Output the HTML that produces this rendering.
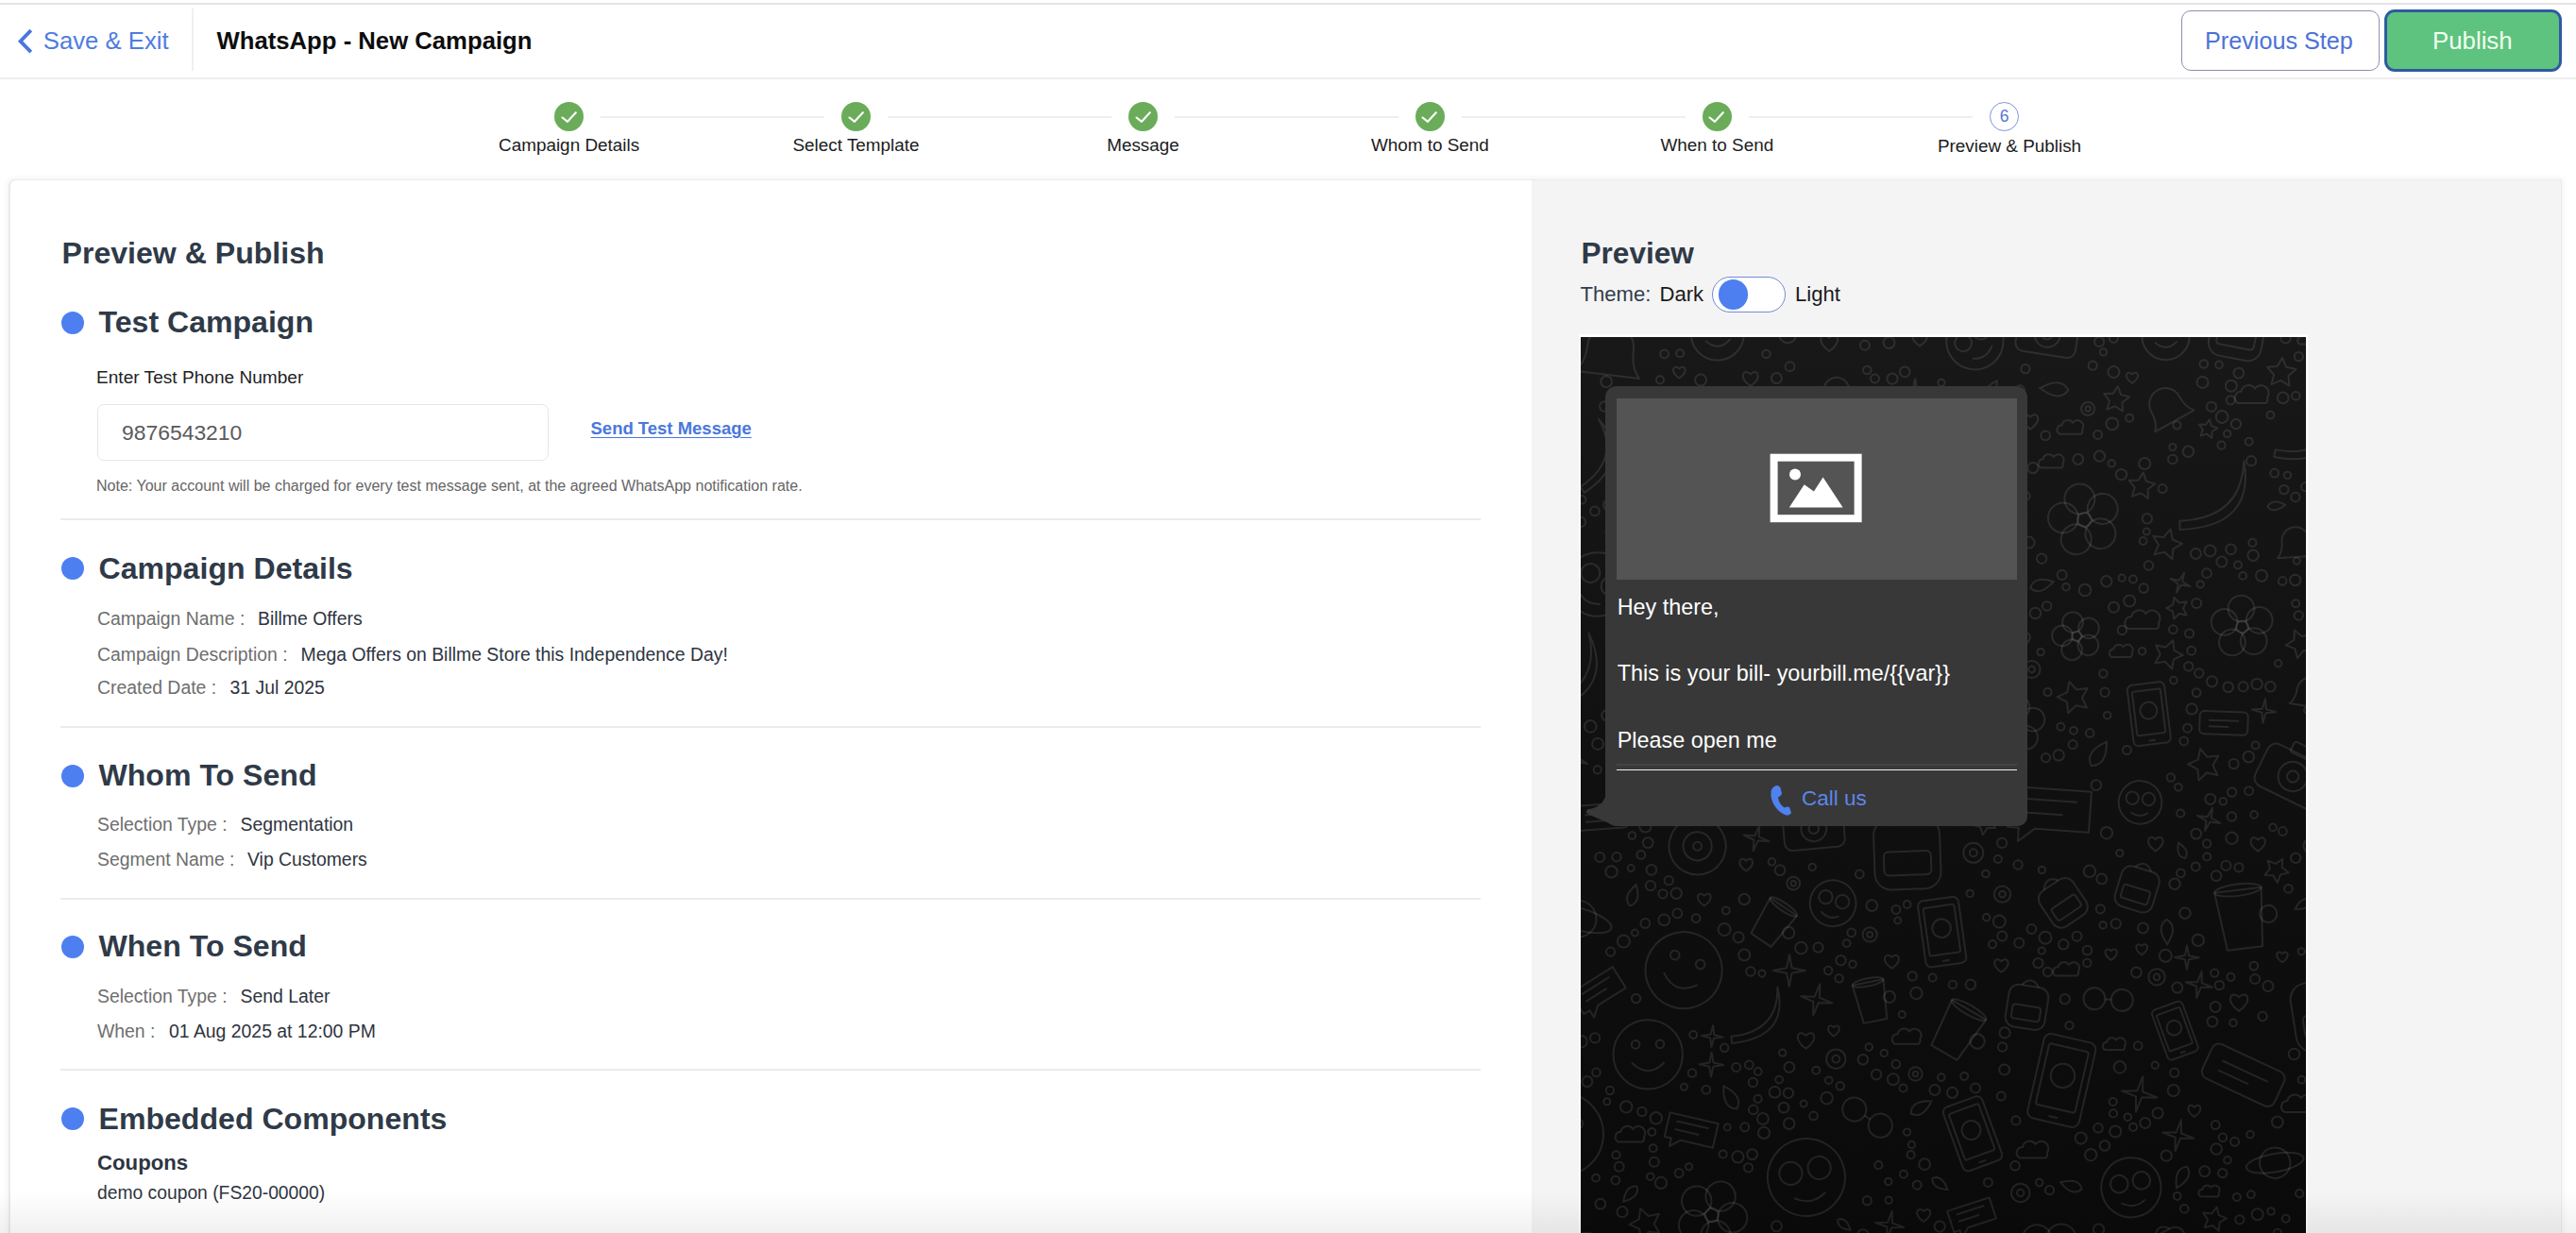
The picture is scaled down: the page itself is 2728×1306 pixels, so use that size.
<!DOCTYPE html>
<html><head><meta charset="utf-8">
<style>
html,body{margin:0;padding:0}
body{width:2728px;height:1306px;position:relative;overflow:hidden;background:#fff;font-family:"Liberation Sans",sans-serif;}
.a{position:absolute}
.t{position:absolute;line-height:1;white-space:nowrap}
.b{font-weight:bold}
</style></head><body>
<div class="a" style="left:0;top:3px;width:2728px;height:2px;background:#e3e3e3"></div>
<div class="a" style="left:0;top:81.5px;width:2728px;height:2px;background:#eeeeee"></div>
<svg class="a" style="left:14px;top:26px" width="28" height="36" viewBox="0 0 28 36"><polyline points="18.8,6.2 7.6,17.7 18.8,29.2" fill="none" stroke="#4a76de" stroke-width="3.8"/></svg>
<div class="t" style="left:45.8px;top:31.16px;font-size:25.7px;color:#4f7ddf;">Save &amp; Exit</div>
<div class="a" style="left:203px;top:9px;width:2px;height:66px;background:#f0f0f0"></div>
<div class="t b" style="left:229.5px;top:30.95px;font-size:25.7px;color:#0d0d0d;">WhatsApp - New Campaign</div>
<div class="a" style="left:2310px;top:11px;width:207.5px;height:62px;border:1.5px solid #8d90ac;border-radius:10px;background:#fff"></div>
<div class="t" style="left:2335px;top:30.98px;font-size:25.2px;color:#4d72d6;">Previous Step</div>
<div class="a" style="left:2525px;top:10px;width:182px;height:60px;border:3px solid #2f5aa3;border-radius:11px;background:#5ec37e"></div>
<div class="t" style="left:2576px;top:31.07px;font-size:25.8px;color:#f2fff2;">Publish</div>
<div class="a" style="left:587.1px;top:108.0px;width:31.0px;height:31.0px;border-radius:50%;background:#6aac5a"></div>
<svg class="a" style="left:592.6px;top:114.5px" width="20" height="18" viewBox="0 0 20 18"><polyline points="2.5,9.5 8,13.8 16.8,4.2" fill="none" stroke="#fff" stroke-width="2.1" stroke-linecap="round" stroke-linejoin="round"/></svg>
<div class="a" style="left:636.1px;top:122.5px;width:236.9px;height:2px;background:#eeeeee"></div>
<div class="t" style="left:452.6px;top:144.6px;width:300px;text-align:center;font-size:18.9px;color:#1c1c1c">Campaign Details</div>
<div class="a" style="left:891.0px;top:108.0px;width:31.0px;height:31.0px;border-radius:50%;background:#6aac5a"></div>
<svg class="a" style="left:896.5px;top:114.5px" width="20" height="18" viewBox="0 0 20 18"><polyline points="2.5,9.5 8,13.8 16.8,4.2" fill="none" stroke="#fff" stroke-width="2.1" stroke-linecap="round" stroke-linejoin="round"/></svg>
<div class="a" style="left:940.0px;top:122.5px;width:237.0px;height:2px;background:#eeeeee"></div>
<div class="t" style="left:756.5px;top:144.6px;width:300px;text-align:center;font-size:18.9px;color:#1c1c1c">Select Template</div>
<div class="a" style="left:1195.0px;top:108.0px;width:31.0px;height:31.0px;border-radius:50%;background:#6aac5a"></div>
<svg class="a" style="left:1200.5px;top:114.5px" width="20" height="18" viewBox="0 0 20 18"><polyline points="2.5,9.5 8,13.8 16.8,4.2" fill="none" stroke="#fff" stroke-width="2.1" stroke-linecap="round" stroke-linejoin="round"/></svg>
<div class="a" style="left:1244.0px;top:122.5px;width:236.9px;height:2px;background:#eeeeee"></div>
<div class="t" style="left:1060.5px;top:144.6px;width:300px;text-align:center;font-size:18.9px;color:#1c1c1c">Message</div>
<div class="a" style="left:1498.9px;top:108.0px;width:31.0px;height:31.0px;border-radius:50%;background:#6aac5a"></div>
<svg class="a" style="left:1504.4px;top:114.5px" width="20" height="18" viewBox="0 0 20 18"><polyline points="2.5,9.5 8,13.8 16.8,4.2" fill="none" stroke="#fff" stroke-width="2.1" stroke-linecap="round" stroke-linejoin="round"/></svg>
<div class="a" style="left:1547.9px;top:122.5px;width:236.9px;height:2px;background:#eeeeee"></div>
<div class="t" style="left:1364.4px;top:144.6px;width:300px;text-align:center;font-size:18.9px;color:#1c1c1c">Whom to Send</div>
<div class="a" style="left:1802.8px;top:108.0px;width:31.0px;height:31.0px;border-radius:50%;background:#6aac5a"></div>
<svg class="a" style="left:1808.3px;top:114.5px" width="20" height="18" viewBox="0 0 20 18"><polyline points="2.5,9.5 8,13.8 16.8,4.2" fill="none" stroke="#fff" stroke-width="2.1" stroke-linecap="round" stroke-linejoin="round"/></svg>
<div class="a" style="left:1851.8px;top:122.5px;width:237.2px;height:2px;background:#eeeeee"></div>
<div class="t" style="left:1668.3px;top:144.6px;width:300px;text-align:center;font-size:18.9px;color:#1c1c1c">When to Send</div>
<div class="a" style="left:2106.5px;top:107.5px;width:29px;height:29px;border-radius:50%;border:1.5px solid #7d95e0;background:#fff"></div>
<div class="t" style="left:2107.5px;top:114.6px;width:30px;text-align:center;font-size:17.5px;color:#5577d6">6</div>
<div class="t" style="left:1978.0px;top:145.7px;width:300px;text-align:center;font-size:18.9px;color:#1c1c1c">Preview &amp; Publish</div>
<div class="a" style="left:8.5px;top:189.5px;width:2701px;height:1140px;border-radius:7px 0 0 0;background:#fff;box-shadow:0 0 7px 1px rgba(0,0,0,0.06);border:1.5px solid #ebebeb;border-left:2.5px solid #eaeaea"></div>
<div class="a" style="left:1622px;top:190.5px;width:1090px;height:1140px;background:#f4f4f4"></div>
<div class="t b" style="left:65.5px;top:251.52px;font-size:32.1px;color:#2f3a48;">Preview &amp; Publish</div>
<div class="a" style="left:65px;top:329.5px;width:24px;height:24px;border-radius:50%;background:#4d7ff0"></div>
<div class="t b" style="left:104.5px;top:324.71px;font-size:32.1px;color:#2f3a48;">Test Campaign</div>
<div class="t" style="left:102px;top:390.06px;font-size:19.1px;color:#1f1f1f;">Enter Test Phone Number</div>
<div class="a" style="left:103px;top:428px;width:476px;height:58px;border:1.5px solid #e6e6e6;border-radius:7px;background:#fff"></div>
<div class="t" style="left:129px;top:446.54px;font-size:22.9px;color:#5a5a5a;">9876543210</div>
<div class="t b" style="left:625.5px;top:444.88px;font-size:18.5px;color:#4a78dc;text-decoration:underline;text-underline-offset:3px">Send Test Message</div>
<div class="t" style="left:102px;top:505.66px;font-size:16.05px;color:#666;">Note: Your account will be charged for every test message sent, at the agreed WhatsApp notification rate.</div>
<div class="a" style="left:64px;top:549px;width:1504px;height:2px;background:#ebebeb"></div>
<div class="a" style="left:65px;top:590.4px;width:24px;height:24px;border-radius:50%;background:#4d7ff0"></div>
<div class="t b" style="left:104.5px;top:585.62px;font-size:32.1px;color:#2f3a48;">Campaign Details</div>
<div class="t" style="left:103px;top:645.51px;font-size:19.4px;color:#6e6e6e;">Campaign Name :</div>
<div class="t" style="left:273px;top:645.51px;font-size:19.4px;color:#2e3440;">Billme Offers</div>
<div class="t" style="left:103px;top:683.71px;font-size:19.4px;color:#6e6e6e;">Campaign Description :</div>
<div class="t" style="left:318.5px;top:683.71px;font-size:19.4px;color:#2e3440;">Mega Offers on Billme Store this Independence Day!</div>
<div class="t" style="left:103px;top:719.11px;font-size:19.4px;color:#6e6e6e;">Created Date :</div>
<div class="t" style="left:243.5px;top:719.11px;font-size:19.4px;color:#2e3440;">31 Jul 2025</div>
<div class="a" style="left:64px;top:769px;width:1504px;height:2px;background:#ebebeb"></div>
<div class="a" style="left:65px;top:809.5px;width:24px;height:24px;border-radius:50%;background:#4d7ff0"></div>
<div class="t b" style="left:104.5px;top:804.72px;font-size:32.1px;color:#2f3a48;">Whom To Send</div>
<div class="t" style="left:103px;top:864.21px;font-size:19.4px;color:#6e6e6e;">Selection Type :</div>
<div class="t" style="left:254.5px;top:864.21px;font-size:19.4px;color:#2e3440;">Segmentation</div>
<div class="t" style="left:103px;top:900.71px;font-size:19.4px;color:#6e6e6e;">Segment Name :</div>
<div class="t" style="left:262px;top:900.71px;font-size:19.4px;color:#2e3440;">Vip Customers</div>
<div class="a" style="left:64px;top:951px;width:1504px;height:2px;background:#ebebeb"></div>
<div class="a" style="left:65px;top:991.1px;width:24px;height:24px;border-radius:50%;background:#4d7ff0"></div>
<div class="t b" style="left:104.5px;top:986.32px;font-size:32.1px;color:#2f3a48;">When To Send</div>
<div class="t" style="left:103px;top:1046.11px;font-size:19.4px;color:#6e6e6e;">Selection Type :</div>
<div class="t" style="left:254.5px;top:1046.11px;font-size:19.4px;color:#2e3440;">Send Later</div>
<div class="t" style="left:103px;top:1083.21px;font-size:19.4px;color:#6e6e6e;">When :</div>
<div class="t" style="left:179px;top:1083.21px;font-size:19.4px;color:#2e3440;">01 Aug 2025 at 12:00 PM</div>
<div class="a" style="left:64px;top:1132px;width:1504px;height:2px;background:#ebebeb"></div>
<div class="a" style="left:65px;top:1173.3px;width:24px;height:24px;border-radius:50%;background:#4d7ff0"></div>
<div class="t b" style="left:104.5px;top:1168.51px;font-size:32.1px;color:#2f3a48;">Embedded Components</div>
<div class="t b" style="left:103px;top:1221.13px;font-size:22.2px;color:#2e3440;">Coupons</div>
<div class="t" style="left:103px;top:1253.60px;font-size:19.3px;color:#2e3440;">demo coupon (FS20-00000)</div>
<div class="t b" style="left:1674.5px;top:252.74px;font-size:31.6px;color:#2f3a48;">Preview</div>
<div class="t" style="left:1673.5px;top:301.01px;font-size:22.1px;color:#333d4b;">Theme:</div>
<div class="t" style="left:1757.5px;top:301.01px;font-size:22.1px;color:#1a1a1a;">Dark</div>
<div class="a" style="left:1812.5px;top:292.5px;width:76px;height:36px;border:1.5px solid #7389d6;border-radius:20px;background:#fff"></div>
<div class="a" style="left:1819.5px;top:296px;width:31.5px;height:31.5px;border-radius:50%;background:#4d7ff0"></div>
<div class="t" style="left:1901px;top:301.01px;font-size:22.1px;color:#1a1a1a;">Light</div>
<div class="a" style="left:1672px;top:354px;width:772px;height:960px;background:#fdfdfd"></div>
<div class="a" style="left:1674px;top:357px;width:768px;height:960px;overflow:hidden;background:linear-gradient(#181818,#0f0f0f 55%,#0a0a0a)"><svg class="a" style="left:0;top:0" width="768" height="960" viewBox="0 0 768 960"><g fill="none" stroke="rgba(255,255,255,0.1)" stroke-width="2"><g transform="translate(345.5 539.8) rotate(-2)"><rect x="-35.0" y="-30.0" width="70.0" height="75.0" rx="17.5"/><rect x="-25.0" y="5.0" width="50.0" height="25.0" rx="5.0"/><path d="M-15.0,-30.0 q15.0,-20.0 30.0,0"/></g><g transform="translate(670.9 169.9) rotate(-2)"><path d="M-37.5,23.5 Q28.1,23.5 32.8,-37.5 Q42.2,32.8 -37.5,32.8 z" stroke-linejoin="round"/></g><g transform="translate(620.7 74.1) rotate(-29)"><path d="M-23.7,16.9 q6.8,-6.8 6.8,-20.3 a16.9,16.9 0 0 1 33.9,0 q0,13.6 6.8,20.3 z" stroke-linejoin="round"/><circle cx="0.0" cy="22.0" r="4.1"/></g><g transform="translate(699.4 614.5) rotate(-7)"><path d="M-24.9,-29.0 L-18.7,33.2 L18.7,33.2 L24.9,-29.0 z" stroke-linejoin="round"/><ellipse cx="0" cy="-29.0" rx="24.9" ry="6.2"/><circle cx="29.0" cy="0.0" r="9.1"/></g><g transform="translate(508.4 595.6) rotate(-34)"><rect x="-21.1" y="-18.1" width="42.1" height="45.1" rx="10.5"/><rect x="-15.0" y="3.0" width="30.1" height="15.0" rx="3.0"/><path d="M-9.0,-18.1 q9.0,-12.0 18.1,0"/></g><g transform="translate(31.0 15.7) rotate(7)"><path d="M-34.2,24.4 q9.8,-9.8 9.8,-29.3 a24.4,24.4 0 0 1 48.9,0 q0,19.5 9.8,29.3 z" stroke-linejoin="round"/><circle cx="0.0" cy="31.8" r="5.9"/></g><g transform="translate(354.9 420.5) rotate(1)"><rect x="-45.5" y="-21.6" width="91.0" height="43.1" rx="8.6"/><path d="M-28.7,-4.8 L28.7,-4.8"/><path d="M-28.7,7.2 L9.6,7.2"/></g><g transform="translate(217.7 -15.4) rotate(11)"><circle cx="12.7" cy="0.0" r="9.0"/><circle cx="3.9" cy="12.1" r="9.0"/><circle cx="-10.3" cy="7.5" r="9.0"/><circle cx="-10.3" cy="-7.5" r="9.0"/><circle cx="3.9" cy="-12.1" r="9.0"/><circle cx="0.0" cy="0.0" r="4.2"/></g><g transform="translate(786.1 975.7) rotate(15)"><circle cx="0.0" cy="0.0" r="23.9"/><ellipse cx="0" cy="0" rx="45.5" ry="14.4"/></g><g transform="translate(592.5 492.9) rotate(4)"><circle cx="0.0" cy="0.0" r="22.8"/><circle cx="-8.6" cy="-4.0" r="6.7"/><circle cx="8.6" cy="-4.0" r="6.7"/><path d="M-9.4,10.7 q9.4,6.7 18.7,0"/></g><g transform="translate(303.5 826.6) rotate(32)"><circle cx="-16.2" cy="0.0" r="12.6"/><circle cx="16.2" cy="0.0" r="12.6"/><path d="M-3.6,0.0 L3.6,0.0"/></g><g transform="translate(533.4 193.5) rotate(-31)"><circle cx="22.5" cy="0.0" r="16.0"/><circle cx="7.0" cy="21.4" r="16.0"/><circle cx="-18.2" cy="13.3" r="16.0"/><circle cx="-18.2" cy="-13.3" r="16.0"/><circle cx="7.0" cy="-21.4" r="16.0"/><circle cx="0.0" cy="0.0" r="7.5"/></g><g transform="translate(772.1 377.4) rotate(9)"><path d="M-19.5,13.9 q5.6,-5.6 5.6,-16.7 a13.9,13.9 0 0 1 27.9,0 q0,11.2 5.6,16.7 z" stroke-linejoin="round"/><circle cx="0.0" cy="18.1" r="3.3"/></g><g transform="translate(525.3 316.9) rotate(-34)"><circle cx="15.3" cy="0.0" r="10.9"/><circle cx="4.7" cy="14.6" r="10.9"/><circle cx="-12.4" cy="9.0" r="10.9"/><circle cx="-12.4" cy="-9.0" r="10.9"/><circle cx="4.7" cy="-14.6" r="10.9"/><circle cx="0.0" cy="0.0" r="5.1"/></g><g transform="translate(123.6 539.3) rotate(-22)"><circle cx="0.0" cy="0.0" r="30.1"/><circle cx="0.0" cy="0.0" r="15.1"/><circle cx="0.0" cy="0.0" r="4.5"/></g><g transform="translate(601.8 399.2) rotate(-7)"><rect x="-19.8" y="-32.4" width="39.6" height="64.8" rx="5.4"/><rect x="-15.1" y="-25.2" width="30.2" height="46.8" rx="1.8"/><circle cx="0.0" cy="-3.6" r="9.0"/><path d="M-3.6,28.1 L3.6,28.1"/></g><g transform="translate(-19.6 844.3) rotate(6)"><circle cx="0.0" cy="0.0" r="43.6"/><path d="M-20.5,10.3 q20.5,20.5 41.1,0"/><circle cx="-15.4" cy="-12.8" r="5.1"/><circle cx="15.4" cy="-12.8" r="5.1"/></g><g transform="translate(150.3 374.3) rotate(10)"><circle cx="0.0" cy="0.0" r="41.0"/><circle cx="-15.4" cy="-7.2" r="12.1"/><circle cx="15.4" cy="-7.2" r="12.1"/><path d="M-16.9,19.3 q16.9,12.1 33.7,0"/></g><g transform="translate(14.0 126.4) rotate(-34)"><path d="M-30.0,18.7 Q22.5,18.7 26.2,-30.0 Q33.7,26.2 -30.0,26.2 z" stroke-linejoin="round"/></g><g transform="translate(245.8 276.3) rotate(-29)"><path d="M-22.3,14.0 Q16.7,14.0 19.5,-22.3 Q25.1,19.5 -22.3,19.5 z" stroke-linejoin="round"/></g><g transform="translate(494.4 -4.5) rotate(9)"><rect x="-32.0" y="-19.6" width="64.1" height="42.7" rx="8.5"/><rect x="-12.5" y="-28.5" width="24.9" height="10.7" rx="2.1"/><circle cx="0.0" cy="1.8" r="13.5"/><circle cx="0.0" cy="1.8" r="5.3"/></g><g transform="translate(755.0 463.7) rotate(26)"><rect x="-36.8" y="-22.5" width="73.7" height="49.1" rx="9.8"/><rect x="-14.3" y="-32.8" width="28.7" height="12.3" rx="2.5"/><circle cx="0.0" cy="2.0" r="15.6"/><circle cx="0.0" cy="2.0" r="6.1"/></g><g transform="translate(473.2 705.4) rotate(9)"><rect x="-21.1" y="-18.1" width="42.2" height="45.2" rx="10.5"/><rect x="-15.1" y="3.0" width="30.1" height="15.1" rx="3.0"/><path d="M-9.0,-18.1 q9.0,-12.0 18.1,0"/></g><g transform="translate(138.8 930.1) rotate(7)"><circle cx="22.0" cy="0.0" r="15.7"/><circle cx="6.8" cy="20.9" r="15.7"/><circle cx="-17.8" cy="12.9" r="15.7"/><circle cx="-17.8" cy="-12.9" r="15.7"/><circle cx="6.8" cy="-20.9" r="15.7"/><circle cx="0.0" cy="0.0" r="7.3"/></g><g transform="translate(186.2 719.8) rotate(-6)"><path d="M-28.9,18.1 Q21.7,18.1 25.3,-28.9 Q32.6,25.3 -28.9,25.3 z" stroke-linejoin="round"/></g><g transform="translate(769.6 106.4) rotate(11)"><path d="M-30.8,19.2 Q23.1,19.2 26.9,-30.8 Q34.6,26.9 -30.8,26.9 z" stroke-linejoin="round"/></g><g transform="translate(144.8 -3.4) rotate(-4)"><circle cx="0.0" cy="0.0" r="28.0"/><path d="M-13.2,6.6 q13.2,13.2 26.4,0"/><circle cx="-9.9" cy="-8.2" r="3.3"/><circle cx="9.9" cy="-8.2" r="3.3"/></g><g transform="translate(17.7 262.0) rotate(33)"><circle cx="0.0" cy="0.0" r="33.8"/><circle cx="-12.7" cy="-6.0" r="10.0"/><circle cx="12.7" cy="-6.0" r="10.0"/><path d="M-13.9,15.9 q13.9,10.0 27.9,0"/></g><g transform="translate(-2.8 616.2) rotate(16)"><circle cx="0.0" cy="0.0" r="19.3"/><ellipse cx="0" cy="0" rx="36.6" ry="11.6"/></g><g transform="translate(256.0 64.9) rotate(-30)"><circle cx="-17.2" cy="0.0" r="13.4"/><circle cx="17.2" cy="0.0" r="13.4"/><path d="M-3.8,0.0 L3.8,0.0"/></g><g transform="translate(496.6 973.3) rotate(16)"><circle cx="22.0" cy="0.0" r="15.6"/><circle cx="6.8" cy="20.9" r="15.6"/><circle cx="-17.8" cy="12.9" r="15.6"/><circle cx="-17.8" cy="-12.9" r="15.6"/><circle cx="6.8" cy="-20.9" r="15.6"/><circle cx="0.0" cy="0.0" r="7.3"/></g><g transform="translate(395.7 290.2) rotate(-33)"><circle cx="0.0" cy="0.0" r="22.6"/><circle cx="0.0" cy="0.0" r="11.3"/><circle cx="0.0" cy="0.0" r="3.4"/></g><g transform="translate(71.2 759.9) rotate(-1)"><circle cx="0.0" cy="0.0" r="36.7"/><path d="M-17.3,8.6 q17.3,17.3 34.5,0"/><circle cx="-12.9" cy="-10.8" r="4.3"/><circle cx="12.9" cy="-10.8" r="4.3"/></g><g transform="translate(398.9 733.8) rotate(30)"><path d="M-20.9,-24.4 L-15.7,27.9 L15.7,27.9 L20.9,-24.4 z" stroke-linejoin="round"/><ellipse cx="0" cy="-24.4" rx="20.9" ry="5.2"/><circle cx="24.4" cy="0.0" r="7.7"/></g><g transform="translate(700.5 307.0) rotate(-21)"><circle cx="19.5" cy="0.0" r="13.9"/><circle cx="6.0" cy="18.5" r="13.9"/><circle cx="-15.8" cy="11.5" r="13.9"/><circle cx="-15.8" cy="-11.5" r="13.9"/><circle cx="6.0" cy="-18.5" r="13.9"/><circle cx="0.0" cy="0.0" r="6.5"/></g><g transform="translate(629.4 734.6) rotate(-20)"><rect x="-17.2" y="-28.1" width="34.3" height="56.2" rx="4.7"/><rect x="-13.1" y="-21.8" width="26.2" height="40.6" rx="1.6"/><circle cx="0.0" cy="-3.1" r="7.8"/><path d="M-3.1,24.3 L3.1,24.3"/></g><g transform="translate(619.5 -0.9) rotate(-3)"><circle cx="0.0" cy="0.0" r="25.1"/><path d="M-11.8,5.9 q11.8,11.8 23.6,0"/><circle cx="-8.9" cy="-7.4" r="3.0"/><circle cx="8.9" cy="-7.4" r="3.0"/></g><g transform="translate(623.9 964.0) rotate(-27)"><rect x="-20.3" y="-17.4" width="40.6" height="43.5" rx="10.1"/><rect x="-14.5" y="2.9" width="29.0" height="14.5" rx="2.9"/><path d="M-8.7,-17.4 q8.7,-11.6 17.4,0"/></g><g transform="translate(509.3 787.4) rotate(13)"><rect x="-28.0" y="-45.8" width="56.0" height="91.7" rx="7.6"/><rect x="-21.4" y="-35.6" width="42.8" height="66.2" rx="2.5"/><circle cx="0.0" cy="-5.1" r="12.7"/><path d="M-5.1,39.7 L5.1,39.7"/></g><g transform="translate(697.0 -13.3) rotate(11)"><rect x="-28.2" y="-24.2" width="56.4" height="60.5" rx="14.1"/><rect x="-20.2" y="4.0" width="40.3" height="20.2" rx="4.0"/><path d="M-12.1,-24.2 q12.1,-16.1 24.2,0"/></g><g transform="translate(238.9 890.0) rotate(-11)"><circle cx="0.0" cy="0.0" r="41.0"/><circle cx="-15.4" cy="-7.2" r="12.1"/><circle cx="15.4" cy="-7.2" r="12.1"/><path d="M-16.9,19.3 q16.9,12.1 33.8,0"/></g><g transform="translate(681.0 408.9) rotate(2)"><rect x="-25.6" y="-12.1" width="51.1" height="24.2" rx="4.8"/><path d="M-16.1,-2.7 L16.1,-2.7"/><path d="M-16.1,4.0 L5.4,4.0"/></g><g transform="translate(496.2 502.8) rotate(4)"><path d="M-43.1,-24.0 h86.3 v43.1 h-57.5 l-16.8,14.4 v-14.4 h-12.0 z" stroke-linejoin="round"/><path d="M-28.8,-12.0 L28.8,-12.0"/><path d="M-28.8,2.4 L14.4,2.4"/></g><g transform="translate(67.8 399.5) rotate(-17)"><circle cx="0.0" cy="0.0" r="21.4"/><circle cx="0.0" cy="0.0" r="10.7"/><circle cx="0.0" cy="0.0" r="3.2"/></g><g transform="translate(267.1 599.8) rotate(16)"><circle cx="0.0" cy="0.0" r="24.4"/><circle cx="-9.2" cy="-4.3" r="7.2"/><circle cx="9.2" cy="-4.3" r="7.2"/><path d="M-10.1,11.5 q10.1,7.2 20.1,0"/></g><g transform="translate(414.9 843.8) rotate(-20)"><rect x="-21.9" y="-35.9" width="43.9" height="71.8" rx="6.0"/><rect x="-16.8" y="-27.9" width="33.5" height="51.8" rx="2.0"/><circle cx="0.0" cy="-4.0" r="10.0"/><path d="M-4.0,31.1 L4.0,31.1"/></g><g transform="translate(129.1 183.9) rotate(34)"><rect x="-45.5" y="-21.5" width="90.9" height="43.1" rx="8.6"/><path d="M-28.7,-4.8 L28.7,-4.8"/><path d="M-28.7,7.2 L9.6,7.2"/></g><g transform="translate(701.7 781.7) rotate(25)"><rect x="-42.1" y="-19.9" width="84.2" height="39.9" rx="8.0"/><path d="M-26.6,-4.4 L26.6,-4.4"/><path d="M-26.6,6.6 L8.9,6.6"/></g><g transform="translate(246.6 518.9) rotate(-5)"><rect x="-32.1" y="-19.6" width="64.1" height="42.7" rx="8.5"/><rect x="-12.5" y="-28.5" width="24.9" height="10.7" rx="2.1"/><circle cx="0.0" cy="1.8" r="13.5"/><circle cx="0.0" cy="1.8" r="5.3"/></g><g transform="translate(307.8 702.6) rotate(-11)"><path d="M-16.7,-19.5 L-12.5,22.3 L12.5,22.3 L16.7,-19.5 z" stroke-linejoin="round"/><ellipse cx="0" cy="-19.5" rx="16.7" ry="4.2"/><circle cx="19.5" cy="0.0" r="6.1"/></g><g transform="translate(308.2 162.0) rotate(1)"><path d="M-16.8,-19.6 L-12.6,22.4 L12.6,22.4 L16.8,-19.6 z" stroke-linejoin="round"/><ellipse cx="0" cy="-19.6" rx="16.8" ry="4.2"/><circle cx="19.6" cy="0.0" r="6.2"/></g><g transform="translate(109.2 451.8) rotate(-0)"><path d="M-24.3,15.2 Q18.2,15.2 21.3,-24.3 Q27.4,21.3 -24.3,21.3 z" stroke-linejoin="round"/></g><g transform="translate(462.0 409.6) rotate(-15)"><circle cx="17.5" cy="0.0" r="12.4"/><circle cx="5.4" cy="16.6" r="12.4"/><circle cx="-14.1" cy="10.3" r="12.4"/><circle cx="-14.1" cy="-10.3" r="12.4"/><circle cx="5.4" cy="-16.6" r="12.4"/><circle cx="0.0" cy="0.0" r="5.8"/></g><g transform="translate(22.1 508.1) rotate(-4)"><rect x="-27.8" y="-13.2" width="55.5" height="26.3" rx="5.3"/><path d="M-17.5,-2.9 L17.5,-2.9"/><path d="M-17.5,4.4 L5.8,4.4"/></g><g transform="translate(379.5 113.4) rotate(21)"><path d="M-29.2,-34.0 L-21.9,38.9 L21.9,38.9 L29.2,-34.0 z" stroke-linejoin="round"/><ellipse cx="0" cy="-34.0" rx="29.2" ry="7.3"/><circle cx="34.0" cy="0.0" r="10.7"/></g><g transform="translate(582.9 900.8) rotate(-9)"><circle cx="0.0" cy="0.0" r="31.6"/><circle cx="-11.9" cy="-5.6" r="9.3"/><circle cx="11.9" cy="-5.6" r="9.3"/><path d="M-13.0,14.8 q13.0,9.3 26.0,0"/></g><g transform="translate(240.5 421.0) rotate(28)"><rect x="-39.4" y="-18.7" width="78.8" height="37.3" rx="7.5"/><path d="M-24.9,-4.1 L24.9,-4.1"/><path d="M-24.9,6.2 L8.3,6.2"/></g><g transform="translate(735.2 874.7) rotate(-10)"><circle cx="0.0" cy="0.0" r="16.2"/><ellipse cx="0" cy="0" rx="30.8" ry="9.7"/></g><g transform="translate(417.4 4.3) rotate(-34)"><circle cx="0.0" cy="0.0" r="30.1"/><circle cx="-11.3" cy="-5.3" r="8.9"/><circle cx="11.3" cy="-5.3" r="8.9"/><path d="M-12.4,14.2 q12.4,8.9 24.8,0"/></g><g transform="translate(-10.0 357.1) rotate(-18)"><path d="M-35.6,22.2 Q26.7,22.2 31.1,-35.6 Q40.0,31.1 -35.6,31.1 z" stroke-linejoin="round"/></g><g transform="translate(6.1 967.4) rotate(19)"><circle cx="0.0" cy="0.0" r="18.6"/><ellipse cx="0" cy="0" rx="35.4" ry="11.2"/></g><g transform="translate(173.2 286.3) rotate(-18)"><circle cx="0.0" cy="0.0" r="30.8"/><circle cx="-11.6" cy="-5.4" r="9.1"/><circle cx="11.6" cy="-5.4" r="9.1"/><path d="M-12.7,14.5 q12.7,9.1 25.4,0"/></g><g transform="translate(787.4 710.8) rotate(-9)"><rect x="-34.1" y="-29.2" width="68.1" height="73.0" rx="17.0"/><rect x="-24.3" y="4.9" width="48.7" height="24.3" rx="4.9"/><path d="M-14.6,-29.2 q14.6,-19.5 29.2,0"/></g><g transform="translate(414.4 931.0) rotate(-18)"><path d="M-23.4,-13.0 h46.8 v23.4 h-31.2 l-9.1,7.8 v-7.8 h-6.5 z" stroke-linejoin="round"/><path d="M-15.6,-6.5 L15.6,-6.5"/><path d="M-15.6,1.3 L7.8,1.3"/></g><g transform="translate(116.9 841.5) rotate(13)"><path d="M-26.2,-14.6 h52.4 v26.2 h-35.0 l-10.2,8.7 v-8.7 h-7.3 z" stroke-linejoin="round"/><path d="M-17.5,-7.3 L17.5,-7.3"/><path d="M-17.5,1.5 L8.7,1.5"/></g><g transform="translate(203.7 619.9) rotate(34)"><path d="M-17.0,-19.8 L-12.8,22.7 L12.8,22.7 L17.0,-19.8 z" stroke-linejoin="round"/><ellipse cx="0" cy="-19.8" rx="17.0" ry="4.3"/><circle cx="19.8" cy="0.0" r="6.2"/></g><g transform="translate(558.6 701.6) rotate(3)"><circle cx="-14.7" cy="0.0" r="11.5"/><circle cx="14.7" cy="0.0" r="11.5"/><path d="M-3.3,0.0 L3.3,0.0"/></g><g transform="translate(98.2 291.0) rotate(-13)"><path d="M-21.7,13.6 Q16.3,13.6 19.0,-21.7 Q24.4,19.0 -21.7,19.0 z" stroke-linejoin="round"/></g><g transform="translate(382.7 630.1) rotate(-8)"><rect x="-21.6" y="-35.3" width="43.2" height="70.7" rx="5.9"/><rect x="-16.5" y="-27.5" width="33.0" height="51.1" rx="2.0"/><circle cx="0.0" cy="-3.9" r="9.8"/><path d="M-3.9,30.6 L3.9,30.6"/></g><g transform="translate(109.1 670.7) rotate(20)"><circle cx="0.0" cy="0.0" r="40.5"/><path d="M-19.0,9.5 q19.0,19.0 38.1,0"/><circle cx="-14.3" cy="-11.9" r="4.8"/><circle cx="14.3" cy="-11.9" r="4.8"/></g><g transform="translate(590.4 580.7) rotate(17)"><rect x="-20.6" y="-17.7" width="41.3" height="44.2" rx="10.3"/><rect x="-14.7" y="2.9" width="29.5" height="14.7" rx="2.9"/><path d="M-8.8,-17.7 q8.8,-11.8 17.7,0"/></g><g transform="translate(425.9 221.7) rotate(30)"><circle cx="0.0" cy="0.0" r="19.0"/><ellipse cx="0" cy="0" rx="36.1" ry="11.4"/></g><g transform="translate(155.8 83.4) rotate(16)"><path d="M-19.2,13.7 q5.5,-5.5 5.5,-16.5 a13.7,13.7 0 0 1 27.5,0 q0,11.0 5.5,16.5 z" stroke-linejoin="round"/><circle cx="0.0" cy="17.9" r="3.3"/></g><g transform="translate(19.4 693.3) rotate(-32)"><path d="M-26.2,-14.5 h52.3 v26.2 h-34.9 l-10.2,8.7 v-8.7 h-7.3 z" stroke-linejoin="round"/><path d="M-17.4,-7.3 L17.4,-7.3"/><path d="M-17.4,1.5 L8.7,1.5"/></g><g transform="translate(757.1 218.5) rotate(-4)"><path d="M-20.2,14.4 q5.8,-5.8 5.8,-17.3 a14.4,14.4 0 0 1 28.8,0 q0,11.5 5.8,17.3 z" stroke-linejoin="round"/><circle cx="0.0" cy="18.7" r="3.5"/></g><g transform="translate(486.2 263.0) rotate(75)"><path d="M0,-14.8 Q11.9,3.0 0,10.4 Q-11.9,3.0 0,-14.8 z"/></g><polygon points="595.8,143.6 598.9,152.8 608.3,155.4 600.5,161.2 600.9,170.9 593.0,165.3 583.8,168.7 586.7,159.4 580.7,151.8 590.4,151.7" stroke-linejoin="round"/><path d="M175.2,565.5 C163.4,557.7 169.3,548.8 175.2,554.7 C181.1,548.8 187.0,557.7 175.2,565.5z"/><path d="M156.2,462.6 a4.6,4.6 0 0 1 2.3,-8.7 a5.8,5.8 0 0 1 10.4,-2.3 a5.2,5.2 0 0 1 9.3,7.0 a3.5,3.5 0 0 1 -1.2,4.1 z"/><path d="M320.3,274.3 C307.3,265.7 313.8,255.9 320.3,262.4 C326.7,255.9 333.2,265.7 320.3,274.3z"/><polygon points="221.0,654.1 223.6,668.3 237.8,671.1 223.6,673.7 220.7,687.9 218.1,673.7 203.9,670.9 218.1,668.3" stroke-linejoin="round"/><polygon points="635.9,829.1 635.9,843.5 649.3,848.8 634.9,848.8 629.6,862.2 629.6,847.8 616.2,842.5 630.6,842.5" stroke-linejoin="round"/><circle cx="306.2" cy="632.9" r="7.6"/><circle cx="306.2" cy="632.9" r="2.9"/><path d="M555.0,754.9 a4.4,4.4 0 0 1 2.2,-8.2 a5.5,5.5 0 0 1 9.9,-2.2 a4.9,4.9 0 0 1 8.8,6.6 a3.3,3.3 0 0 1 -1.1,3.8 z"/><g transform="translate(434.4 56.4) rotate(32)"><path d="M0,-11.9 Q9.5,2.4 0,8.3 Q-9.5,2.4 0,-11.9 z"/></g><polygon points="673.7,921.5 675.7,930.1 684.0,933.4 676.4,937.9 675.9,946.8 669.2,941.0 660.7,943.2 664.1,935.1 659.3,927.6 668.1,928.4" stroke-linejoin="round"/><circle cx="309.1" cy="473.6" r="11.2"/><circle cx="309.1" cy="473.6" r="4.3"/><polygon points="325.3,57.2 323.7,65.1 329.3,70.8 321.3,71.8 317.6,78.9 314.2,71.6 306.3,70.2 312.2,64.8 311.1,56.8 318.1,60.7" stroke-linejoin="round"/><circle cx="772.7" cy="538.9" r="7.2"/><circle cx="772.7" cy="538.9" r="2.8"/><g transform="translate(291.2 306.2) rotate(36)"><path d="M0,-16.5 Q13.2,3.3 0,11.6 Q-13.2,3.3 0,-16.5 z"/></g><path d="M584.0,48.9 C573.7,42.0 578.8,34.2 584.0,39.4 C589.1,34.2 594.3,42.0 584.0,48.9z"/><polygon points="445.6,71.6 443.9,83.9 454.6,90.0 442.3,88.3 436.2,99.0 437.9,86.8 427.2,80.6 439.5,82.3" stroke-linejoin="round"/><path d="M696.1,70.0 a6.5,6.5 0 0 1 3.3,-12.2 a8.1,8.1 0 0 1 14.6,-3.3 a7.3,7.3 0 0 1 13.0,9.8 a4.9,4.9 0 0 1 -1.6,5.7 z"/><path d="M697.1,713.8 C681.0,703.1 689.0,691.1 697.1,699.1 C705.1,691.1 713.1,703.1 697.1,713.8z"/><g transform="translate(521.4 899.6) rotate(288)"><path d="M0,-13.9 Q11.2,2.8 0,9.8 Q-11.2,2.8 0,-13.9 z"/></g><circle cx="190.8" cy="228.4" r="7.6"/><circle cx="190.8" cy="228.4" r="2.9"/><polygon points="412.0,357.5 410.9,367.7 419.9,372.6 409.7,371.4 404.9,380.5 406.0,370.3 396.9,365.4 407.2,366.6" stroke-linejoin="round"/><path d="M189.3,127.8 C175.9,118.9 182.6,108.9 189.3,115.6 C195.9,108.9 202.6,118.9 189.3,127.8z"/><g transform="translate(268.6 128.0) rotate(24)"><path d="M0,-17.6 Q14.1,3.5 0,12.3 Q-14.1,3.5 0,-17.6 z"/></g><path d="M656.4,910.3 a4.1,4.1 0 0 1 2.0,-7.6 a5.1,5.1 0 0 1 9.1,-2.0 a4.6,4.6 0 0 1 8.1,6.1 a3.0,3.0 0 0 1 -1.0,3.6 z"/><path d="M594.1,654.3 C583.9,647.4 589.0,639.8 594.1,644.9 C599.3,639.8 604.4,647.4 594.1,654.3z"/><path d="M263.2,15.0 C247.7,4.7 255.5,-7.0 263.2,0.8 C271.0,-7.0 278.7,4.7 263.2,15.0z"/><polygon points="724.9,383.2 725.9,394.1 736.3,397.2 725.5,398.2 722.3,408.6 721.4,397.7 710.9,394.6 721.8,393.7" stroke-linejoin="round"/><polygon points="253.3,685.4 253.0,699.8 266.3,705.5 251.8,705.2 246.1,718.5 246.5,704.0 233.2,698.3 247.6,698.7" stroke-linejoin="round"/><g transform="translate(735.1 178.8) rotate(85)"><path d="M0,-11.1 Q8.9,2.2 0,7.8 Q-8.9,2.2 0,-11.1 z"/></g><path d="M561.7,659.9 C551.1,652.8 556.4,644.9 561.7,650.2 C566.9,644.9 572.2,652.8 561.7,659.9z"/><circle cx="415.8" cy="546.3" r="10.5"/><circle cx="415.8" cy="546.3" r="4.0"/><polygon points="268.7,953.8 271.1,962.7 279.8,965.7 272.1,970.8 271.9,980.0 264.7,974.2 255.9,976.9 259.1,968.3 253.9,960.7 263.1,961.1" stroke-linejoin="round"/><circle cx="477.6" cy="352.0" r="9.0"/><circle cx="477.6" cy="352.0" r="3.4"/><circle cx="446.5" cy="590.1" r="8.7"/><circle cx="446.5" cy="590.1" r="3.4"/><polygon points="357.8,297.4 356.5,313.7 371.1,320.9 354.9,319.6 347.6,334.1 349.0,317.9 334.4,310.7 350.6,312.0" stroke-linejoin="round"/><path d="M464.8,869.4 a6.1,6.1 0 0 1 3.1,-11.4 a7.6,7.6 0 0 1 13.7,-3.1 a6.9,6.9 0 0 1 12.2,9.2 a4.6,4.6 0 0 1 -1.5,5.3 z"/><path d="M449.9,155.7 C433.0,144.5 441.5,131.8 449.9,140.2 C458.3,131.8 466.8,144.5 449.9,155.7z"/><g transform="translate(620.8 627.6) rotate(179)"><path d="M0,-15.5 Q12.4,3.1 0,10.8 Q-12.4,3.1 0,-15.5 z"/></g><polygon points="624.5,203.7 626.8,214.5 637.0,218.8 627.4,224.3 626.4,235.3 618.3,227.8 607.5,230.3 612.0,220.3 606.3,210.8 617.3,212.0" stroke-linejoin="round"/><g transform="translate(159.6 807.5) rotate(330)"><path d="M0,-16.4 Q13.1,3.3 0,11.5 Q-13.1,3.3 0,-16.4 z"/></g><polygon points="641.8,280.3 638.0,287.3 641.6,294.4 633.8,292.9 628.2,298.5 627.1,290.7 620.1,287.1 627.2,283.7 628.5,275.8 633.9,281.6" stroke-linejoin="round"/><polygon points="536.7,372.0 531.0,382.1 536.0,392.6 524.6,390.2 516.2,398.3 515.0,386.7 504.7,381.2 515.3,376.4 517.4,365.0 525.2,373.6" stroke-linejoin="round"/><path d="M297.3,248.7 C283.0,239.1 290.1,228.4 297.3,235.6 C304.4,228.4 311.6,239.1 297.3,248.7z"/><g transform="translate(766.2 600.4) rotate(241)"><path d="M0,-11.0 Q8.8,2.2 0,7.7 Q-8.8,2.2 0,-11.0 z"/></g><g transform="translate(379.1 895.9) rotate(127)"><path d="M0,-11.8 Q9.4,2.4 0,8.3 Q-9.4,2.4 0,-11.8 z"/></g><g transform="translate(205.0 173.6) rotate(278)"><path d="M0,-15.2 Q12.1,3.0 0,10.6 Q-12.1,3.0 0,-15.2 z"/></g><polygon points="669.1,498.6 667.7,509.5 677.3,514.9 666.4,513.5 661.1,523.1 662.5,512.2 652.8,506.9 663.7,508.3" stroke-linejoin="round"/><polygon points="743.3,553.0 742.6,561.8 749.6,567.4 741.0,569.5 737.9,577.8 733.2,570.3 724.3,569.9 730.0,563.1 727.6,554.6 735.9,557.9" stroke-linejoin="round"/><polygon points="140.1,729.3 141.2,739.0 150.7,741.6 140.9,742.7 138.4,752.2 137.2,742.5 127.8,739.9 137.5,738.8" stroke-linejoin="round"/><polygon points="-2.0,430.4 -4.9,444.1 6.8,451.9 -6.9,449.0 -14.7,460.7 -11.8,446.9 -23.5,439.2 -9.7,442.1" stroke-linejoin="round"/><circle cx="225.2" cy="578.7" r="6.9"/><circle cx="225.2" cy="578.7" r="2.7"/><polygon points="773.9,314.4 770.0,324.1 775.8,332.7 765.4,332.0 758.9,340.2 756.4,330.1 746.6,326.5 755.4,320.9 755.9,310.5 763.9,317.2" stroke-linejoin="round"/><g transform="translate(504.0 55.3) rotate(274)"><path d="M0,-17.8 Q14.3,3.6 0,12.5 Q-14.3,3.6 0,-17.8 z"/></g><path d="M267.9,740.5 C257.7,733.7 262.8,726.1 267.9,731.2 C273.0,726.1 278.1,733.7 267.9,740.5z"/><path d="M579.8,308.9 a6.7,6.7 0 0 1 3.4,-12.6 a8.4,8.4 0 0 1 15.1,-3.4 a7.6,7.6 0 0 1 13.5,10.1 a5.0,5.0 0 0 1 -1.7,5.9 z"/><path d="M503.0,676.6 a5.0,5.0 0 0 1 2.5,-9.4 a6.3,6.3 0 0 1 11.3,-2.5 a5.7,5.7 0 0 1 10.1,7.5 a3.8,3.8 0 0 1 -1.3,4.4 z"/><path d="M717.2,544.6 C704.0,535.8 710.6,525.9 717.2,532.5 C723.8,525.9 730.3,535.8 717.2,544.6z"/><path d="M761.5,7.6 a4.5,4.5 0 0 1 2.2,-8.4 a5.6,5.6 0 0 1 10.1,-2.2 a5.0,5.0 0 0 1 8.9,6.7 a3.4,3.4 0 0 1 -1.1,3.9 z"/><polygon points="138.6,757.7 140.5,768.6 151.3,770.9 140.4,772.8 138.0,783.6 136.2,772.7 125.4,770.3 136.3,768.5" stroke-linejoin="round"/><path d="M363.2,936.9 C351.1,928.9 357.2,919.8 363.2,925.9 C369.2,919.8 375.3,928.9 363.2,936.9z"/><path d="M86.2,245.3 C75.7,238.3 80.9,230.5 86.2,235.7 C91.4,230.5 96.7,238.3 86.2,245.3z"/><g transform="translate(358.6 817.1) rotate(59)"><path d="M0,-15.0 Q12.0,3.0 0,10.5 Q-12.0,3.0 0,-15.0 z"/></g><path d="M232.2,964.4 C222.4,957.9 227.3,950.5 232.2,955.4 C237.2,950.5 242.1,957.9 232.2,964.4z"/><path d="M179.8,51.9 C166.0,42.7 172.9,32.4 179.8,39.3 C186.6,32.4 193.5,42.7 179.8,51.9z"/><path d="M359.1,9.4 C345.9,0.5 352.5,-9.4 359.1,-2.8 C365.7,-9.4 372.4,0.5 359.1,9.4z"/><g transform="translate(67.3 215.6) rotate(106)"><path d="M0,-11.2 Q8.9,2.2 0,7.8 Q-8.9,2.2 0,-11.2 z"/></g><g transform="translate(94.2 123.3) rotate(264)"><path d="M0,-17.1 Q13.7,3.4 0,12.0 Q-13.7,3.4 0,-17.1 z"/></g><polygon points="595.2,783.3 595.2,799.5 610.3,805.5 594.0,805.5 588.0,820.6 588.0,804.4 572.9,798.4 589.2,798.4" stroke-linejoin="round"/><polygon points="189.3,517.5 188.7,529.3 199.5,534.1 187.7,533.6 182.8,544.3 183.4,532.5 172.7,527.6 184.4,528.2" stroke-linejoin="round"/><polygon points="377.3,173.7 375.3,183.5 383.6,188.9 373.9,186.9 368.4,195.3 370.4,185.5 362.0,180.0 371.8,182.0" stroke-linejoin="round"/><path d="M313.5,358.5 C299.0,348.8 306.3,337.9 313.5,345.2 C320.8,337.9 328.1,348.8 313.5,358.5z"/><path d="M130.8,602.5 C118.9,594.6 124.9,585.6 130.8,591.6 C136.8,585.6 142.7,594.6 130.8,602.5z"/><path d="M104.3,43.5 C93.5,36.2 98.9,28.1 104.3,33.5 C109.7,28.1 115.1,36.2 104.3,43.5z"/><polygon points="421.3,451.5 418.9,468.0 433.3,476.3 416.9,473.9 408.6,488.3 411.0,471.9 396.6,463.5 413.0,465.9" stroke-linejoin="round"/><g transform="translate(90.5 335.5) rotate(305)"><path d="M0,-11.9 Q9.5,2.4 0,8.4 Q-9.5,2.4 0,-11.9 z"/></g><path d="M242.4,175.7 a5.1,5.1 0 0 1 2.5,-9.5 a6.4,6.4 0 0 1 11.5,-2.5 a5.7,5.7 0 0 1 10.2,7.6 a3.8,3.8 0 0 1 -1.3,4.5 z"/><path d="M238.5,753.7 C223.3,743.5 230.9,732.1 238.5,739.7 C246.2,732.1 253.8,743.5 238.5,753.7z"/><polygon points="82.9,928.8 77.7,939.2 83.4,949.3 71.9,947.6 64.0,956.1 62.1,944.7 51.5,939.8 61.8,934.4 63.2,922.9 71.5,931.0" stroke-linejoin="round"/><path d="M608.8,544.3 C595.5,535.3 602.2,525.3 608.8,532.0 C615.5,525.3 622.2,535.3 608.8,544.3z"/><circle cx="354.5" cy="780.5" r="7.2"/><circle cx="354.5" cy="780.5" r="2.8"/><path d="M507.1,102.7 a5.1,5.1 0 0 1 2.5,-9.5 a6.3,6.3 0 0 1 11.4,-2.5 a5.7,5.7 0 0 1 10.1,7.6 a3.8,3.8 0 0 1 -1.3,4.4 z"/><path d="M39.5,852.5 a5.8,5.8 0 0 1 2.9,-10.8 a7.2,7.2 0 0 1 12.9,-2.9 a6.5,6.5 0 0 1 11.5,8.6 a4.3,4.3 0 0 1 -1.4,5.0 z"/><g transform="translate(637.1 545.3) rotate(337)"><path d="M0,-10.6 Q8.5,2.1 0,7.4 Q-8.5,2.1 0,-10.6 z"/></g><polygon points="444.8,291.2 444.0,298.1 449.2,302.7 442.4,304.1 439.6,310.5 436.2,304.4 429.2,303.8 434.0,298.6 432.4,291.8 438.8,294.7" stroke-linejoin="round"/><circle cx="391.7" cy="339.8" r="6.7"/><circle cx="391.7" cy="339.8" r="2.6"/><g transform="translate(703.4 961.0) rotate(91)"><path d="M0,-17.1 Q13.7,3.4 0,12.0 Q-13.7,3.4 0,-17.1 z"/></g><g transform="translate(-9.0 767.3) rotate(179)"><path d="M0,-10.5 Q8.4,2.1 0,7.3 Q-8.4,2.1 0,-10.5 z"/></g><polygon points="227.6,206.4 225.9,217.3 235.5,222.9 224.5,221.3 219.0,230.8 220.6,219.9 211.1,214.3 222.0,216.0" stroke-linejoin="round"/><g transform="translate(225.2 112.7) rotate(94)"><path d="M0,-10.8 Q8.6,2.2 0,7.6 Q-8.6,2.2 0,-10.8 z"/></g><circle cx="89.6" cy="71.9" r="10.7"/><circle cx="89.6" cy="71.9" r="4.1"/><polygon points="436.3,504.9 433.8,513.1 439.1,519.9 430.5,520.0 425.8,527.2 423.0,519.1 414.7,516.7 421.6,511.6 421.2,503.0 428.2,507.9" stroke-linejoin="round"/><g transform="translate(637.5 888.0) rotate(206)"><path d="M0,-14.9 Q11.9,3.0 0,10.4 Q-11.9,3.0 0,-14.9 z"/></g><path d="M27.2,183.2 a6.2,6.2 0 0 1 3.1,-11.5 a7.7,7.7 0 0 1 13.8,-3.1 a6.9,6.9 0 0 1 12.3,9.2 a4.6,4.6 0 0 1 -1.5,5.4 z"/><circle cx="465.7" cy="906.5" r="9.7"/><circle cx="465.7" cy="906.5" r="3.7"/><path d="M476.1,97.6 C461.9,88.1 469.0,77.4 476.1,84.6 C483.2,77.4 490.3,88.1 476.1,97.6z"/><polygon points="329.6,925.5 330.0,938.5 342.2,942.9 329.2,943.3 324.8,955.6 324.4,942.5 312.2,938.1 325.2,937.7" stroke-linejoin="round"/><polygon points="333.1,207.3 334.7,217.7 344.9,220.1 334.5,221.7 332.2,232.0 330.6,221.6 320.3,219.2 330.7,217.6" stroke-linejoin="round"/><polygon points="639.0,249.6 637.3,259.0 645.4,264.1 636.0,262.4 630.9,270.6 632.6,261.1 624.4,256.0 633.9,257.7" stroke-linejoin="round"/><polygon points="666.0,87.4 667.8,94.0 674.2,96.3 668.5,100.0 668.3,106.9 663.0,102.6 656.4,104.5 658.8,98.1 654.9,92.5 661.8,92.8" stroke-linejoin="round"/><path d="M332.7,748.8 a5.6,5.6 0 0 1 2.8,-10.5 a7.0,7.0 0 0 1 12.5,-2.8 a6.3,6.3 0 0 1 11.2,8.4 a4.2,4.2 0 0 1 -1.4,4.9 z"/><path d="M649.8,826.0 C638.6,818.5 644.2,810.0 649.8,815.7 C655.5,810.0 661.1,818.5 649.8,826.0z"/><path d="M329.4,668.7 C316.6,660.1 323.0,650.5 329.4,656.9 C335.9,650.5 342.3,660.1 329.4,668.7z"/><path d="M742.9,662.2 C732.9,655.6 737.9,648.1 742.9,653.1 C747.8,648.1 752.8,655.6 742.9,662.2z"/><path d="M242.5,349.1 a4.5,4.5 0 0 1 2.3,-8.5 a5.6,5.6 0 0 1 10.2,-2.3 a5.1,5.1 0 0 1 9.0,6.8 a3.4,3.4 0 0 1 -1.1,3.9 z"/><g transform="translate(53.7 906.3) rotate(222)"><path d="M0,-12.6 Q10.0,2.5 0,8.8 Q-10.0,2.5 0,-12.6 z"/></g><g transform="translate(264.6 228.0) rotate(237)"><path d="M0,-14.3 Q11.4,2.9 0,10.0 Q-11.4,2.9 0,-14.3 z"/></g><polygon points="354.2,955.0 355.8,964.4 364.4,968.4 355.9,972.7 354.8,982.1 348.0,975.5 338.7,977.3 343.0,968.8 338.4,960.5 347.8,961.9" stroke-linejoin="round"/><g transform="translate(359.4 256.1) rotate(54)"><path d="M0,-14.5 Q11.6,2.9 0,10.1 Q-11.6,2.9 0,-14.5 z"/></g><g transform="translate(54.8 593.2) rotate(16)"><path d="M0,-13.6 Q10.9,2.7 0,9.6 Q-10.9,2.7 0,-13.6 z"/></g><polygon points="657.6,671.8 657.6,684.1 669.1,688.7 656.8,688.7 652.2,700.1 652.2,687.8 640.7,683.2 653.1,683.2" stroke-linejoin="round"/><path d="M745.1,820.9 a6.4,6.4 0 0 1 3.2,-11.9 a8.0,8.0 0 0 1 14.3,-3.2 a7.2,7.2 0 0 1 12.7,9.5 a4.8,4.8 0 0 1 -1.6,5.6 z"/><polygon points="743.1,21.8 747.1,31.7 757.5,34.0 749.4,40.9 750.4,51.5 741.3,45.9 731.5,50.1 734.1,39.8 727.0,31.8 737.7,31.0" stroke-linejoin="round"/><path d="M487.3,138.4 a4.9,4.9 0 0 1 2.4,-9.2 a6.1,6.1 0 0 1 11.0,-2.4 a5.5,5.5 0 0 1 9.8,7.3 a3.7,3.7 0 0 1 -1.2,4.3 z"/><polygon points="627.2,321.3 628.4,331.8 637.7,336.9 628.0,341.3 626.1,351.7 619.0,343.8 608.4,345.2 613.7,336.0 609.1,326.4 619.5,328.6" stroke-linejoin="round"/><path d="M562.0,338.9 a4.6,4.6 0 0 1 2.3,-8.5 a5.7,5.7 0 0 1 10.2,-2.3 a5.1,5.1 0 0 1 9.1,6.8 a3.4,3.4 0 0 1 -1.1,4.0 z"/><polygon points="675.3,443.4 669.4,453.4 674.4,464.0 663.0,461.5 654.5,469.5 653.3,457.9 643.1,452.3 653.8,447.6 656.0,436.1 663.7,444.8" stroke-linejoin="round"/><circle cx="294.5" cy="442.0" r="7.6"/><circle cx="294.5" cy="442.0" r="2.9"/><path d="M469.0,326.9 C457.1,318.9 463.0,310.0 469.0,316.0 C475.0,310.0 480.9,318.9 469.0,326.9z"/><circle cx="270.3" cy="764.7" r="10.2"/><circle cx="270.3" cy="764.7" r="3.9"/><path d="M445.4,672.6 C433.0,664.3 439.2,654.9 445.4,661.2 C451.6,654.9 457.9,664.3 445.4,672.6z"/><g transform="translate(547.3 443.7) rotate(33)"><path d="M0,-17.6 Q14.1,3.5 0,12.3 Q-14.1,3.5 0,-17.6 z"/></g><g transform="translate(277.8 939.2) rotate(130)"><path d="M0,-10.1 Q8.1,2.0 0,7.1 Q-8.1,2.0 0,-10.1 z"/></g><circle cx="537.1" cy="76.0" r="7.1"/><circle cx="537.1" cy="76.0" r="2.7"/><polygon points="568.8,52.0 571.9,60.9 581.1,63.4 573.5,69.2 574.0,78.6 566.2,73.2 557.3,76.6 560.0,67.5 554.1,60.1 563.6,59.9" stroke-linejoin="round"/><circle cx="610.0" cy="677.9" r="8.7"/><circle cx="610.0" cy="677.9" r="3.3"/><g transform="translate(62.6 88.8) rotate(109)"><path d="M0,-10.9 Q8.7,2.2 0,7.6 Q-8.7,2.2 0,-10.9 z"/></g><circle cx="571.7" cy="961.0" r="11.0"/><circle cx="571.7" cy="961.0" r="4.2"/><polygon points="354.1,44.3 355.8,53.8 365.3,55.7 355.8,57.4 353.9,66.8 352.2,57.4 342.8,55.5 352.2,53.8" stroke-linejoin="round"/><polygon points="642.0,644.5 644.0,655.2 654.6,657.3 644.0,659.2 641.9,669.9 639.9,659.2 629.2,657.1 639.9,655.1" stroke-linejoin="round"/><circle cx="69.5" cy="324.4" r="5.6"/><circle cx="0.0" cy="195.9" r="5.1"/><circle cx="643.4" cy="121.3" r="5.7"/><circle cx="351.2" cy="676.9" r="4.7"/><circle cx="707.3" cy="444.6" r="5.8"/><circle cx="492.0" cy="636.2" r="6.5"/><circle cx="58.1" cy="315.0" r="4.4"/><circle cx="557.6" cy="400.7" r="3.8"/><circle cx="305.2" cy="752.1" r="3.8"/><circle cx="566.7" cy="621.4" r="5.1"/><circle cx="536.5" cy="649.6" r="4.8"/><circle cx="441.4" cy="483.3" r="4.4"/><circle cx="208.9" cy="467.5" r="3.7"/><circle cx="39.5" cy="79.0" r="5.9"/><circle cx="207.4" cy="43.6" r="5.5"/><circle cx="639.9" cy="610.2" r="5.8"/><circle cx="563.7" cy="810.0" r="4.1"/><circle cx="496.5" cy="903.6" r="4.6"/><circle cx="291.8" cy="494.7" r="6.1"/><circle cx="212.4" cy="145.1" r="3.9"/><circle cx="355.4" cy="695.0" r="6.2"/><circle cx="573.3" cy="310.4" r="4.7"/><circle cx="465.3" cy="55.9" r="4.6"/><circle cx="564.5" cy="286.2" r="5.5"/><circle cx="215.0" cy="816.1" r="5.4"/><circle cx="680.3" cy="491.8" r="3.8"/><circle cx="595.5" cy="625.9" r="5.5"/><circle cx="672.2" cy="834.6" r="4.5"/><circle cx="673.2" cy="860.0" r="5.8"/><circle cx="295.3" cy="569.0" r="4.4"/><circle cx="221.5" cy="31.2" r="4.9"/><circle cx="54.4" cy="528.0" r="3.8"/><circle cx="713.1" cy="505.9" r="3.8"/><circle cx="164.7" cy="773.4" r="4.5"/><circle cx="570.8" cy="546.6" r="3.7"/><circle cx="73.9" cy="581.1" r="5.1"/><circle cx="727.9" cy="687.5" r="5.5"/><circle cx="343.2" cy="36.8" r="5.4"/><circle cx="127.6" cy="109.8" r="5.2"/><circle cx="128.9" cy="486.9" r="4.9"/><circle cx="155.1" cy="128.1" r="6.2"/><circle cx="44.1" cy="324.6" r="4.0"/><circle cx="666.8" cy="489.4" r="5.5"/><circle cx="564.0" cy="822.4" r="4.1"/><circle cx="689.6" cy="482.1" r="4.7"/><circle cx="760.3" cy="295.0" r="4.7"/><circle cx="707.7" cy="110.7" r="4.0"/><circle cx="18.1" cy="430.9" r="6.0"/><circle cx="182.4" cy="789.5" r="4.7"/><circle cx="668.9" cy="725.1" r="5.4"/><circle cx="200.4" cy="479.4" r="5.8"/><circle cx="16.5" cy="778.9" r="4.3"/><circle cx="460.9" cy="829.9" r="4.6"/><circle cx="122.1" cy="615.6" r="4.4"/><circle cx="303.3" cy="35.0" r="4.3"/><circle cx="31.6" cy="651.1" r="4.6"/><circle cx="333.9" cy="606.4" r="4.5"/><circle cx="127.1" cy="45.6" r="6.0"/><circle cx="294.8" cy="365.0" r="3.9"/><circle cx="566.2" cy="841.5" r="6.1"/><circle cx="585.0" cy="836.8" r="4.1"/><circle cx="68.4" cy="518.4" r="6.1"/><circle cx="440.4" cy="320.3" r="4.5"/><circle cx="273.9" cy="462.0" r="5.1"/><circle cx="685.7" cy="370.8" r="5.3"/><circle cx="654.8" cy="356.0" r="4.7"/><circle cx="684.7" cy="102.4" r="3.7"/><circle cx="311.5" cy="44.1" r="4.5"/><circle cx="73.8" cy="889.2" r="3.8"/><circle cx="236.1" cy="811.9" r="3.5"/><circle cx="272.7" cy="366.4" r="6.5"/><circle cx="522.0" cy="416.8" r="3.9"/><circle cx="667.9" cy="73.8" r="5.1"/><circle cx="44.0" cy="926.7" r="5.6"/><circle cx="743.1" cy="258.4" r="4.3"/><circle cx="562.8" cy="91.8" r="6.4"/><circle cx="409.3" cy="505.0" r="4.3"/><circle cx="335.7" cy="617.9" r="3.5"/><circle cx="220.9" cy="773.4" r="5.4"/><circle cx="757.3" cy="62.2" r="4.3"/><circle cx="350.4" cy="855.4" r="3.6"/><circle cx="115.9" cy="328.1" r="4.7"/><circle cx="474.6" cy="217.6" r="6.0"/><circle cx="688.5" cy="224.9" r="5.3"/><circle cx="30.9" cy="206.1" r="4.5"/><circle cx="651.7" cy="526.1" r="5.4"/><circle cx="300.9" cy="8.7" r="5.0"/><circle cx="121.6" cy="251.6" r="3.9"/><circle cx="620.2" cy="867.1" r="5.7"/><circle cx="222.0" cy="471.8" r="4.8"/><circle cx="84.7" cy="354.6" r="3.8"/><circle cx="362.7" cy="228.4" r="3.8"/><circle cx="432.2" cy="358.4" r="4.4"/><circle cx="463.1" cy="559.0" r="4.7"/><circle cx="324.0" cy="94.3" r="5.1"/><circle cx="644.5" cy="314.0" r="4.6"/><circle cx="548.0" cy="837.8" r="4.8"/><circle cx="448.7" cy="776.0" r="5.5"/><circle cx="17.7" cy="458.4" r="4.1"/><circle cx="738.0" cy="948.9" r="4.2"/><circle cx="67.2" cy="464.2" r="6.4"/><circle cx="570.9" cy="773.4" r="6.3"/><circle cx="14.9" cy="184.3" r="4.9"/><circle cx="192.2" cy="466.9" r="6.1"/><circle cx="436.1" cy="643.1" r="4.1"/><circle cx="696.8" cy="38.1" r="5.4"/><circle cx="348.3" cy="234.4" r="4.2"/><circle cx="694.0" cy="92.1" r="5.2"/><circle cx="511.3" cy="643.3" r="5.2"/><circle cx="608.2" cy="771.3" r="3.7"/><circle cx="447.8" cy="336.6" r="5.6"/><circle cx="716.7" cy="929.2" r="6.0"/><circle cx="429.7" cy="614.8" r="3.7"/><circle cx="326.2" cy="914.3" r="3.7"/><circle cx="84.0" cy="45.3" r="4.1"/><circle cx="484.4" cy="663.1" r="5.2"/><circle cx="651.4" cy="229.5" r="5.5"/><circle cx="721.0" cy="252.8" r="6.0"/><circle cx="639.2" cy="923.3" r="4.4"/><circle cx="627.9" cy="363.6" r="3.8"/><circle cx="627.7" cy="798.1" r="6.1"/><circle cx="102.4" cy="610.4" r="4.9"/><circle cx="377.5" cy="215.1" r="4.5"/><circle cx="412.2" cy="589.4" r="3.7"/><circle cx="688.4" cy="677.8" r="4.1"/><circle cx="434.7" cy="959.9" r="6.0"/><circle cx="20.3" cy="551.1" r="5.0"/><circle cx="113.6" cy="87.5" r="5.9"/><circle cx="722.1" cy="719.5" r="4.7"/><circle cx="647.1" cy="393.9" r="5.7"/><circle cx="87.2" cy="147.6" r="4.2"/><circle cx="210.3" cy="321.3" r="5.9"/><circle cx="209.0" cy="383.4" r="3.5"/><circle cx="481.4" cy="292.5" r="5.8"/><circle cx="508.3" cy="412.7" r="4.0"/><circle cx="32.5" cy="566.4" r="6.2"/><circle cx="761.2" cy="907.2" r="4.1"/><circle cx="210.1" cy="786.6" r="3.9"/><circle cx="416.5" cy="389.6" r="4.1"/><circle cx="712.1" cy="231.3" r="5.7"/><circle cx="260.6" cy="806.1" r="6.3"/><circle cx="581.1" cy="85.7" r="4.0"/><circle cx="651.2" cy="560.9" r="4.5"/><circle cx="757.2" cy="551.8" r="5.2"/><circle cx="240.2" cy="232.2" r="6.0"/><circle cx="749.4" cy="584.3" r="4.4"/><circle cx="525.5" cy="634.8" r="5.0"/><circle cx="763.4" cy="786.7" r="3.9"/><circle cx="437.7" cy="175.7" r="4.5"/><circle cx="638.7" cy="428.0" r="4.4"/><circle cx="529.7" cy="848.6" r="6.1"/><circle cx="471.6" cy="168.4" r="4.1"/><circle cx="266.4" cy="474.2" r="3.7"/><circle cx="689.5" cy="530.7" r="6.2"/><circle cx="517.4" cy="729.1" r="4.2"/><circle cx="730.3" cy="370.2" r="5.3"/><circle cx="564.4" cy="37.1" r="6.0"/><circle cx="743.4" cy="523.5" r="4.4"/><circle cx="534.0" cy="268.0" r="6.3"/><circle cx="364.1" cy="876.2" r="5.9"/><circle cx="40.7" cy="878.7" r="5.0"/><circle cx="45.4" cy="640.0" r="6.5"/><circle cx="733.0" cy="519.4" r="3.8"/><circle cx="549.4" cy="126.2" r="5.6"/><circle cx="313.1" cy="781.1" r="5.3"/><circle cx="72.2" cy="135.1" r="4.7"/><circle cx="441.9" cy="553.0" r="4.1"/><circle cx="470.9" cy="33.7" r="4.6"/><circle cx="173.2" cy="595.5" r="5.7"/><circle cx="485.6" cy="895.6" r="3.8"/><circle cx="755.5" cy="759.5" r="5.8"/><circle cx="584.9" cy="256.5" r="4.0"/><circle cx="274.8" cy="336.2" r="4.2"/><circle cx="493.6" cy="285.0" r="4.8"/><circle cx="678.8" cy="238.1" r="5.5"/><circle cx="174.4" cy="480.1" r="4.5"/><circle cx="488.1" cy="234.7" r="5.2"/><circle cx="743.7" cy="64.4" r="5.9"/><circle cx="635.2" cy="504.5" r="4.1"/><circle cx="244.1" cy="119.8" r="4.9"/><circle cx="624.9" cy="466.5" r="4.2"/><circle cx="763.2" cy="650.8" r="3.6"/><circle cx="179.9" cy="672.0" r="4.8"/><circle cx="679.9" cy="847.8" r="4.3"/><circle cx="194.0" cy="842.9" r="6.1"/><circle cx="737.8" cy="831.5" r="5.9"/><circle cx="232.0" cy="364.6" r="6.3"/><circle cx="619.3" cy="655.2" r="6.5"/><circle cx="595.6" cy="216.0" r="3.9"/><circle cx="155.2" cy="836.9" r="3.5"/><circle cx="542.2" cy="30.2" r="4.6"/><circle cx="629.0" cy="579.2" r="5.7"/><circle cx="206.6" cy="492.7" r="4.6"/><circle cx="74.9" cy="564.3" r="5.4"/><circle cx="738.7" cy="345.7" r="3.7"/><circle cx="202.4" cy="555.8" r="3.8"/><circle cx="166.4" cy="868.4" r="6.1"/><circle cx="287.8" cy="389.9" r="5.9"/><circle cx="85.0" cy="895.9" r="6.1"/><circle cx="20.9" cy="918.2" r="5.4"/><circle cx="626.8" cy="129.5" r="4.8"/><circle cx="347.0" cy="345.8" r="5.9"/><circle cx="540.2" cy="866.2" r="6.2"/><circle cx="77.8" cy="873.8" r="5.0"/><circle cx="488.4" cy="564.4" r="3.7"/><circle cx="40.7" cy="467.1" r="3.5"/><circle cx="158.2" cy="479.3" r="4.9"/><circle cx="632.9" cy="476.8" r="3.9"/><circle cx="175.4" cy="141.0" r="5.5"/><circle cx="672.1" cy="709.5" r="5.5"/><circle cx="79.8" cy="827.3" r="6.2"/><circle cx="109.5" cy="794.2" r="3.5"/><circle cx="701.6" cy="370.3" r="5.1"/><circle cx="180.7" cy="430.7" r="5.2"/><circle cx="286.7" cy="630.8" r="4.4"/><circle cx="548.5" cy="945.3" r="5.7"/><circle cx="68.3" cy="621.0" r="4.9"/><circle cx="326.5" cy="201.6" r="4.3"/><circle cx="457.9" cy="177.3" r="6.3"/><circle cx="345.6" cy="842.1" r="3.7"/><circle cx="626.8" cy="116.6" r="3.6"/><circle cx="572.5" cy="145.6" r="5.7"/><circle cx="588.4" cy="672.9" r="5.5"/><circle cx="64.8" cy="820.4" r="4.7"/><circle cx="418.2" cy="164.4" r="3.6"/><circle cx="684.9" cy="871.8" r="3.8"/><circle cx="663.2" cy="550.5" r="4.1"/><circle cx="218.1" cy="303.2" r="4.0"/><circle cx="393.9" cy="685.9" r="4.2"/><circle cx="643.7" cy="348.9" r="4.7"/><circle cx="683.4" cy="559.8" r="5.1"/><circle cx="59.7" cy="342.1" r="3.8"/><circle cx="746.5" cy="1.5" r="5.1"/><circle cx="452.8" cy="288.9" r="3.9"/><circle cx="445.5" cy="363.7" r="5.7"/><circle cx="372.6" cy="678.5" r="4.1"/><circle cx="341.9" cy="886.7" r="4.0"/><circle cx="691.6" cy="452.1" r="5.1"/><circle cx="76.7" cy="859.2" r="4.0"/><circle cx="90.1" cy="489.4" r="5.0"/><circle cx="760.4" cy="20.7" r="4.6"/><circle cx="627.3" cy="309.7" r="4.4"/><circle cx="387.9" cy="501.3" r="4.0"/><circle cx="556.9" cy="525.2" r="6.2"/><circle cx="275.5" cy="660.2" r="5.2"/><circle cx="679.7" cy="885.5" r="4.6"/><circle cx="211.0" cy="564.7" r="5.4"/><circle cx="38.0" cy="550.7" r="4.7"/><circle cx="599.2" cy="206.0" r="3.5"/><circle cx="446.5" cy="266.0" r="3.5"/><circle cx="321.8" cy="122.9" r="4.4"/><circle cx="412.9" cy="685.9" r="5.3"/><circle cx="538.9" cy="565.8" r="6.2"/><circle cx="52.8" cy="298.8" r="5.5"/><circle cx="312.0" cy="203.4" r="4.6"/><circle cx="553.5" cy="15.9" r="3.7"/><circle cx="451.9" cy="462.3" r="4.2"/><circle cx="32.1" cy="455.0" r="5.2"/><circle cx="578.4" cy="437.5" r="4.5"/><circle cx="381.8" cy="784.1" r="3.8"/><circle cx="487.1" cy="333.6" r="3.7"/><circle cx="216.1" cy="129.6" r="3.9"/><circle cx="249.3" cy="776.8" r="4.0"/><circle cx="556.8" cy="258.7" r="5.7"/><circle cx="381.9" cy="48.3" r="3.6"/><circle cx="88.3" cy="617.3" r="5.9"/><circle cx="251.5" cy="646.6" r="5.1"/><circle cx="27.8" cy="809.7" r="3.5"/><circle cx="37.5" cy="866.3" r="4.1"/><circle cx="177.5" cy="879.8" r="4.6"/><circle cx="273.6" cy="679.2" r="4.2"/><circle cx="333.8" cy="285.7" r="4.4"/><circle cx="303.0" cy="109.8" r="5.3"/><circle cx="326.5" cy="6.0" r="6.0"/><circle cx="153.0" cy="238.6" r="4.2"/><circle cx="551.7" cy="573.9" r="5.4"/><circle cx="101.2" cy="589.2" r="5.7"/><circle cx="325.8" cy="894.5" r="3.7"/><circle cx="446.3" cy="634.5" r="5.0"/><circle cx="545.9" cy="474.6" r="5.4"/><circle cx="514.0" cy="264.7" r="3.8"/><circle cx="445.2" cy="804.1" r="4.5"/><circle cx="652.1" cy="376.6" r="4.4"/><circle cx="201.4" cy="96.1" r="5.6"/><circle cx="187.8" cy="778.0" r="3.9"/><circle cx="714.1" cy="680.0" r="5.0"/><circle cx="153.8" cy="607.5" r="4.0"/><circle cx="271.8" cy="197.9" r="5.8"/><circle cx="459.5" cy="118.2" r="6.3"/><circle cx="631.8" cy="689.1" r="5.5"/><circle cx="526.7" cy="129.5" r="5.4"/><circle cx="716.1" cy="367.6" r="5.7"/><circle cx="394.8" cy="489.0" r="5.2"/><circle cx="744.8" cy="161.6" r="4.7"/><circle cx="581.2" cy="279.5" r="6.0"/><circle cx="509.6" cy="251.9" r="5.0"/><circle cx="53.2" cy="562.6" r="3.5"/><circle cx="298.9" cy="951.1" r="5.9"/><circle cx="564.3" cy="1.4" r="4.4"/><circle cx="374.9" cy="797.5" r="5.5"/><circle cx="152.1" cy="627.5" r="6.5"/><circle cx="709.9" cy="908.2" r="3.9"/><circle cx="48.2" cy="815.4" r="6.2"/><circle cx="659.8" cy="28.5" r="4.3"/><circle cx="213.7" cy="758.1" r="3.7"/><circle cx="245.2" cy="561.5" r="3.7"/><circle cx="688.9" cy="51.8" r="6.0"/><circle cx="74.4" cy="151.1" r="4.5"/><circle cx="446.5" cy="752.0" r="4.7"/><circle cx="427.1" cy="443.3" r="6.3"/><circle cx="562.2" cy="133.9" r="3.7"/><circle cx="679.1" cy="84.5" r="6.4"/><circle cx="429.9" cy="334.9" r="5.2"/><circle cx="0.5" cy="746.2" r="6.3"/><circle cx="205.5" cy="799.9" r="5.9"/><circle cx="114.6" cy="878.8" r="3.6"/><circle cx="187.6" cy="806.9" r="4.1"/><circle cx="257.2" cy="324.2" r="4.1"/><circle cx="512.7" cy="701.3" r="5.2"/><circle cx="173.7" cy="836.8" r="4.5"/><circle cx="36.8" cy="893.2" r="4.4"/><circle cx="239.7" cy="148.9" r="5.1"/><circle cx="288.0" cy="664.4" r="3.8"/><circle cx="182.8" cy="818.3" r="4.9"/><circle cx="554.9" cy="856.5" r="5.3"/><circle cx="694.8" cy="911.0" r="4.0"/><circle cx="207.4" cy="941.8" r="5.5"/><circle cx="590.2" cy="750.7" r="4.4"/><circle cx="506.2" cy="442.9" r="5.7"/><circle cx="428.5" cy="270.6" r="4.0"/><circle cx="246.5" cy="824.9" r="4.3"/><circle cx="281.6" cy="642.1" r="3.9"/><circle cx="136.6" cy="259.6" r="4.6"/><circle cx="37.9" cy="306.3" r="4.6"/><circle cx="33.6" cy="413.9" r="4.3"/><circle cx="366.8" cy="345.7" r="6.3"/><circle cx="192.9" cy="828.0" r="5.9"/><circle cx="356.2" cy="898.2" r="4.5"/><circle cx="187.9" cy="199.9" r="6.1"/><circle cx="341.5" cy="795.5" r="4.1"/><circle cx="196.5" cy="17.9" r="4.2"/><circle cx="295.3" cy="206.3" r="6.4"/><circle cx="477.4" cy="627.0" r="4.9"/><circle cx="635.4" cy="567.8" r="4.4"/><circle cx="599.8" cy="192.3" r="5.2"/><circle cx="689.4" cy="508.0" r="4.7"/><circle cx="697.0" cy="561.8" r="4.6"/><circle cx="663.0" cy="250.2" r="4.9"/><circle cx="321.3" cy="758.4" r="3.7"/><circle cx="628.7" cy="779.2" r="4.6"/><circle cx="464.2" cy="641.8" r="5.1"/><circle cx="16.0" cy="890.7" r="3.9"/><circle cx="381.8" cy="474.8" r="5.9"/><circle cx="418.9" cy="175.5" r="4.4"/><circle cx="550.3" cy="605.8" r="4.6"/><circle cx="191.8" cy="443.2" r="6.3"/><circle cx="333.8" cy="770.1" r="4.4"/><circle cx="281.9" cy="105.2" r="5.7"/><circle cx="364.6" cy="214.9" r="3.6"/><circle cx="547.6" cy="103.4" r="4.5"/><circle cx="181.6" cy="865.6" r="5.4"/><circle cx="656.1" cy="261.9" r="3.7"/><circle cx="71.2" cy="535.6" r="5.4"/><circle cx="361.9" cy="203.5" r="5.2"/><circle cx="707.6" cy="480.7" r="4.5"/><circle cx="579.2" cy="826.2" r="3.8"/><circle cx="328.2" cy="240.4" r="6.4"/><circle cx="553.3" cy="356.5" r="4.2"/><circle cx="95.0" cy="375.3" r="3.6"/><circle cx="262.7" cy="787.2" r="3.8"/><circle cx="642.6" cy="414.2" r="4.5"/><circle cx="274.8" cy="793.3" r="4.3"/><circle cx="227.7" cy="191.5" r="6.1"/><circle cx="150.7" cy="865.5" r="4.1"/><circle cx="646.7" cy="332.2" r="4.5"/><circle cx="460.0" cy="877.8" r="4.8"/><circle cx="105.1" cy="17.2" r="4.0"/><circle cx="104.1" cy="885.6" r="4.5"/><circle cx="767.6" cy="158.6" r="4.6"/><circle cx="711.4" cy="217.9" r="4.1"/><circle cx="330.9" cy="786.2" r="6.0"/><circle cx="119.2" cy="739.0" r="3.9"/><circle cx="658.5" cy="47.9" r="6.0"/><circle cx="449.1" cy="736.9" r="5.6"/><circle cx="176.9" cy="504.6" r="6.1"/><circle cx="539.2" cy="419.4" r="4.3"/><circle cx="710.1" cy="131.2" r="5.1"/><circle cx="676.4" cy="686.6" r="4.7"/><circle cx="380.5" cy="241.1" r="5.0"/><circle cx="52.8" cy="368.2" r="4.1"/><circle cx="734.7" cy="144.1" r="4.4"/><circle cx="87.0" cy="589.8" r="4.6"/><circle cx="756.9" cy="169.5" r="4.7"/><circle cx="692.6" cy="852.3" r="4.5"/><circle cx="286.8" cy="349.4" r="5.1"/><circle cx="322.5" cy="294.6" r="6.0"/><circle cx="494.6" cy="672.5" r="4.8"/><circle cx="25.2" cy="73.5" r="5.2"/><circle cx="345.7" cy="601.0" r="3.9"/><circle cx="596.1" cy="266.1" r="4.8"/><circle cx="315.3" cy="877.2" r="4.1"/><circle cx="468.6" cy="190.7" r="3.9"/><circle cx="220.7" cy="833.1" r="5.8"/><circle cx="173.2" cy="654.5" r="6.0"/><circle cx="65.1" cy="159.1" r="4.3"/><circle cx="288.6" cy="330.6" r="4.5"/><circle cx="308.3" cy="602.1" r="5.9"/><circle cx="380.2" cy="942.1" r="5.6"/><circle cx="309.3" cy="324.2" r="5.4"/><circle cx="418.0" cy="795.5" r="5.0"/><circle cx="300.3" cy="79.2" r="3.6"/><circle cx="349.6" cy="866.2" r="4.1"/><circle cx="247.6" cy="362.5" r="4.4"/><circle cx="219.9" cy="800.8" r="5.2"/><circle cx="521.1" cy="431.6" r="4.6"/><circle cx="204.1" cy="247.3" r="4.7"/><circle cx="652.1" cy="282.0" r="5.1"/><circle cx="731.0" cy="926.0" r="3.8"/><circle cx="27.9" cy="400.8" r="5.7"/><circle cx="573.1" cy="255.2" r="3.6"/><circle cx="757.2" cy="282.2" r="4.0"/><circle cx="663.1" cy="536.5" r="4.2"/><circle cx="59.6" cy="233.6" r="4.4"/><circle cx="15.1" cy="742.4" r="5.1"/><circle cx="668.5" cy="364.8" r="5.6"/><circle cx="298.9" cy="765.3" r="5.3"/><circle cx="653.8" cy="638.9" r="6.2"/><circle cx="352.3" cy="191.2" r="4.8"/><circle cx="316.9" cy="111.1" r="4.8"/><circle cx="6.9" cy="788.6" r="5.5"/><circle cx="194.4" cy="496.5" r="4.8"/><circle cx="178.3" cy="771.0" r="4.4"/><circle cx="118.0" cy="779.5" r="4.3"/><circle cx="466.5" cy="245.2" r="5.4"/><circle cx="230.9" cy="347.4" r="5.8"/><circle cx="351.1" cy="481.9" r="5.0"/><circle cx="671.2" cy="673.6" r="4.2"/><circle cx="688.3" cy="66.8" r="4.6"/><circle cx="660.7" cy="883.7" r="5.5"/><circle cx="691.0" cy="726.4" r="3.8"/><circle cx="616.1" cy="160.6" r="4.5"/><circle cx="714.6" cy="432.5" r="4.0"/><circle cx="72.0" cy="436.3" r="4.4"/><circle cx="383.4" cy="367.3" r="5.5"/><circle cx="63.8" cy="548.4" r="4.4"/><circle cx="75.3" cy="842.0" r="4.0"/><circle cx="93.2" cy="575.7" r="4.6"/><circle cx="30.9" cy="798.0" r="4.2"/><circle cx="132.8" cy="797.2" r="4.4"/><circle cx="462.3" cy="280.4" r="5.1"/><circle cx="446.1" cy="535.9" r="5.1"/><circle cx="709.0" cy="844.6" r="3.9"/><circle cx="712.9" cy="666.1" r="4.4"/><circle cx="233.4" cy="647.1" r="6.3"/><circle cx="673.0" cy="570.7" r="5.4"/><circle cx="152.2" cy="752.8" r="4.2"/><circle cx="106.1" cy="412.1" r="5.4"/><circle cx="393.5" cy="800.3" r="5.6"/><circle cx="41.9" cy="338.9" r="4.8"/><circle cx="406.2" cy="783.0" r="4.0"/><circle cx="67.6" cy="355.0" r="3.6"/><circle cx="597.2" cy="134.0" r="6.1"/><circle cx="697.8" cy="934.8" r="4.6"/><circle cx="730.4" cy="82.6" r="3.9"/><circle cx="351.9" cy="282.3" r="6.3"/><circle cx="339.3" cy="366.5" r="4.7"/><circle cx="58.6" cy="700.6" r="4.7"/><circle cx="167.1" cy="635.8" r="5.6"/><circle cx="597.7" cy="832.5" r="5.5"/><circle cx="241.8" cy="327.6" r="6.1"/><circle cx="611.1" cy="822.0" r="5.6"/><circle cx="443.3" cy="619.0" r="6.5"/><circle cx="191.9" cy="674.1" r="3.6"/><circle cx="69.3" cy="502.5" r="5.1"/><circle cx="298.4" cy="279.4" r="5.6"/><circle cx="169.5" cy="241.2" r="5.7"/><circle cx="262.1" cy="671.0" r="4.2"/><circle cx="202.4" cy="136.7" r="5.1"/><circle cx="121.9" cy="126.8" r="5.8"/><circle cx="340.3" cy="717.5" r="3.6"/><circle cx="555.1" cy="376.3" r="4.7"/><circle cx="303.3" cy="914.7" r="4.6"/><circle cx="216.1" cy="357.8" r="5.0"/><circle cx="232.8" cy="313.6" r="3.7"/><circle cx="235.3" cy="131.4" r="4.5"/><circle cx="431.4" cy="895.4" r="4.5"/><circle cx="549.1" cy="5.0" r="5.0"/><circle cx="209.4" cy="958.1" r="3.7"/><circle cx="701.2" cy="252.9" r="3.9"/><circle cx="678.5" cy="114.7" r="4.1"/><circle cx="330.0" cy="44.2" r="5.6"/><circle cx="631.7" cy="910.0" r="3.9"/><circle cx="88.6" cy="17.9" r="4.4"/><circle cx="492.2" cy="104.3" r="4.9"/><circle cx="416.0" cy="418.1" r="4.7"/><circle cx="488.2" cy="650.0" r="3.6"/><circle cx="594.5" cy="332.7" r="3.8"/><circle cx="536.3" cy="662.9" r="4.2"/><circle cx="601.4" cy="242.0" r="4.8"/><circle cx="494.5" cy="376.1" r="4.1"/><circle cx="478.9" cy="138.6" r="5.6"/><circle cx="283.9" cy="281.7" r="5.8"/><circle cx="756.7" cy="257.5" r="5.7"/><circle cx="746.7" cy="933.7" r="4.0"/><circle cx="666.5" cy="226.4" r="6.0"/><circle cx="72.0" cy="182.9" r="5.2"/><circle cx="146.6" cy="470.6" r="4.6"/><circle cx="676.0" cy="29.4" r="3.8"/><circle cx="492.5" cy="445.6" r="4.6"/><circle cx="428.9" cy="568.5" r="3.8"/><circle cx="57.4" cy="631.1" r="3.5"/><circle cx="10.3" cy="412.4" r="6.3"/><circle cx="696.0" cy="241.5" r="4.0"/><circle cx="248.7" cy="210.6" r="4.0"/><circle cx="197.6" cy="70.2" r="6.1"/><circle cx="463.2" cy="294.9" r="3.5"/><circle cx="748.4" cy="146.4" r="3.7"/><circle cx="553.1" cy="622.9" r="3.7"/><circle cx="399.7" cy="176.0" r="5.5"/><circle cx="1.2" cy="172.3" r="4.3"/></g></svg></div>
<div class="a" style="left:1699.5px;top:408.5px;width:447.5px;height:466px;border-radius:12px 12px 10px 12px;background:#383838"></div>
<svg class="a" style="left:1670px;top:830px" width="50" height="50" viewBox="1670 830 50 50"><path d="M1700.5,842 C1698.5,851 1691,856 1682.5,857 C1679.5,857.5 1679,861 1682,862.5 L1712,875.5 L1712,842 Z" fill="#383838"/></svg>
<div class="a" style="left:1712px;top:421.5px;width:424px;height:192.5px;background:#545454"></div>
<svg class="a" style="left:1870px;top:476px" width="106" height="82" viewBox="1870 476 106 82">
<rect x="1878.6" y="484.7" width="89" height="64.5" fill="none" stroke="#fff" stroke-width="8"/>
<circle cx="1901" cy="502.6" r="6" fill="#fff"/>
<polygon points="1894.8,537.5 1910.7,513.3 1920.9,520.6 1930.6,505.5 1951.6,537.5" fill="#fff"/>
</svg>
<div class="t" style="left:1712.7px;top:632.11px;font-size:23.4px;color:#fff;">Hey there,</div>
<div class="t" style="left:1712.7px;top:702.11px;font-size:23.4px;color:#fff;">This is your bill- yourbill.me/{{var}}</div>
<div class="t" style="left:1712.7px;top:772.71px;font-size:23.4px;color:#fff;">Please open me</div>
<div class="a" style="left:1712px;top:809px;width:424px;height:2px;background:#444"></div>
<div class="a" style="left:1712px;top:814.5px;width:424px;height:1.8px;background:#f2f2f2"></div>
<svg class="a" style="left:1874px;top:831px" width="24" height="34" viewBox="0 0 24 34"><path d="M6,1.5 C8.5,0.5 10.5,1.5 11.5,3.5 L13,9.5 C12.5,11.5 10.5,12.5 9,13.5 C9.5,18.5 12.5,22.5 16,24.5 C17.5,23.5 19.5,23 21,24 L23,30 C21.5,32.5 18.5,33.5 15,31.5 C6.5,27 0.5,17 1.5,8 C1.8,5 3.5,2.5 6,1.5 Z" fill="#4f82f0"/></svg>
<div class="t" style="left:1908px;top:834.67px;font-size:22.5px;color:#5d86e8;">Call us</div>
<div class="a" style="left:0;top:1262px;width:2728px;height:44px;background:linear-gradient(rgba(0,0,0,0),rgba(0,0,0,0.06))"></div>
</body></html>
